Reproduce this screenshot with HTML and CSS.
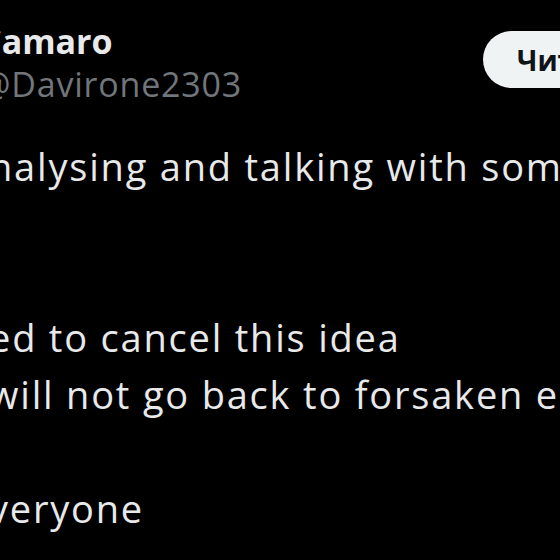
FILE: index.html
```html
<!DOCTYPE html>
<html lang="ru">
<head>
    <meta charset="UTF-8">
    <meta name="viewport" content="width=device-width, initial-scale=1.0">
    <title>Tweet</title>
    <link rel="stylesheet" href="styles.css">
</head>
<body>
    <article class="tweet">
        <header class="tweet-header">
            <div class="user">
                <div class="user-name">Camaro</div>
                <div class="user-handle">@Davirone2303</div>
            </div>
            <button class="follow" type="button">Читать</button>
        </header>

        <div class="tweet-text">
            <p>nalysing and talking with some people</p>
            <p class="gap-2">ed to cancel this idea</p>
            <p>will not go back to forsaken era</p>
            <p class="gap-1">veryone</p>
        </div>
    </article>
</body>
</html>
```

FILE: styles.css
```css
* {
    margin: 0;
    padding: 0;
    box-sizing: border-box;
}
html, body {
    background: #000;
    overflow: hidden;
}
body {
    font-family: "Open Sans", "Noto Sans", sans-serif;
    color: #e7e9ea;
    width: 560px;
    height: 560px;
}
.tweet {
    width: 760px;
    margin-left: -20px;
    padding-top: 20px;
}
.tweet-header {
    display: flex;
    align-items: flex-start;
}
.user {
    flex: 0 0 503px;
    font-size: 34px;
    line-height: 43px;
    white-space: nowrap;
}
.user-name {
    font-weight: 700;
    color: #e7e9ea;
}
.user-handle {
    color: #71767b;
    letter-spacing: 0.8px;
}
.follow {
    margin-top: 11px;
    height: 57px;
    padding: 0 34px;
    border: none;
    border-radius: 29px;
    background: #eff3f4;
    color: #0f1419;
    font-family: "Open Sans", "Noto Sans", sans-serif;
    font-size: 28px;
    font-weight: 700;
    white-space: nowrap;
}
.tweet-text {
    margin-top: 32px;
    margin-left: 9px;
    font-size: 38px;
    line-height: 57px;
    letter-spacing: 1.8px;
    white-space: nowrap;
}
.tweet-text .gap-1 {
    margin-top: 57px;
}
.tweet-text .gap-2 {
    margin-top: 114px;
}
```
